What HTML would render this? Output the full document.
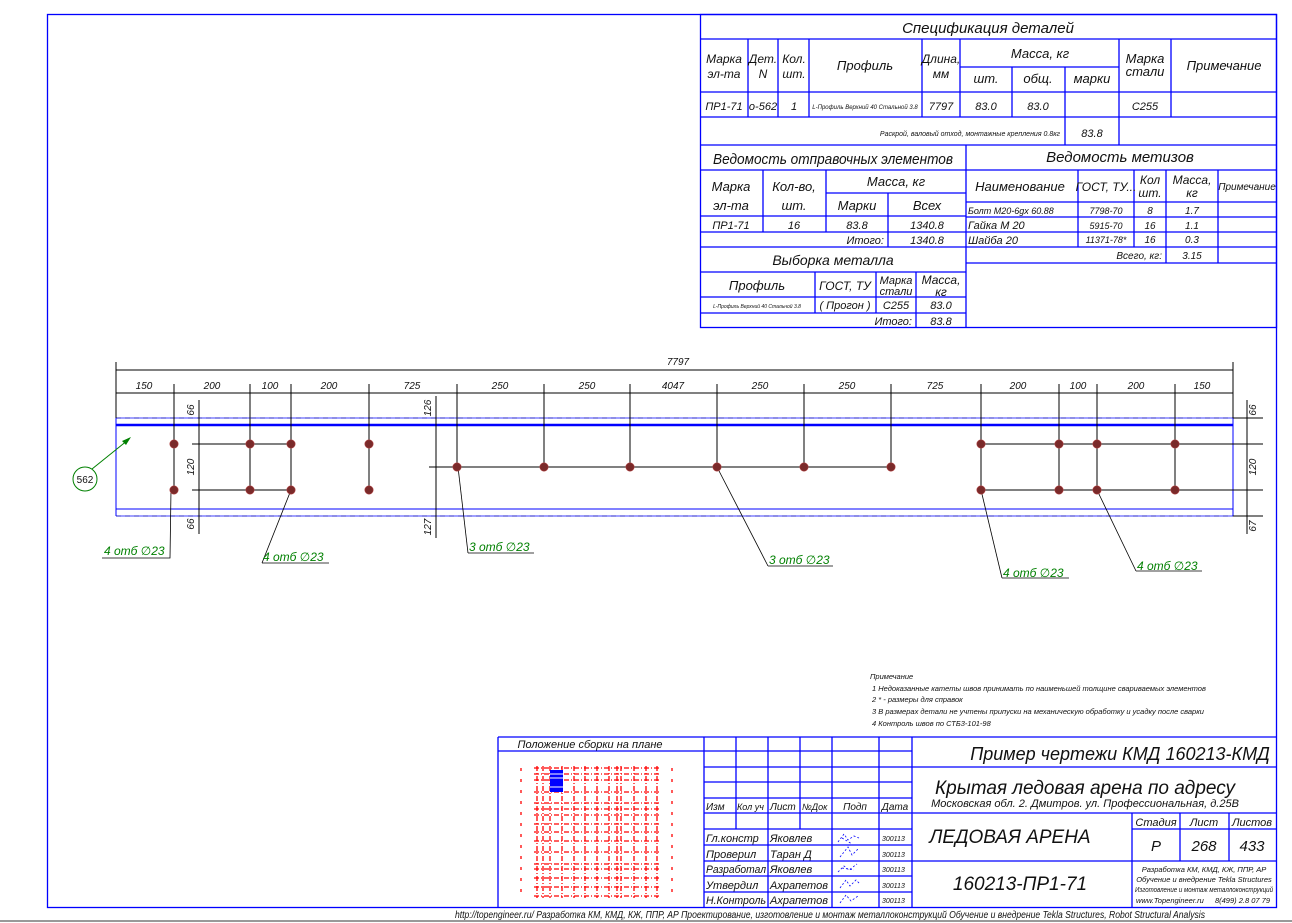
<!DOCTYPE html>
<html><head><meta charset="utf-8"><style>
html,body{margin:0;padding:0;background:#fff;width:1292px;height:923px;overflow:hidden}
svg{display:block}
text{font-family:"Liberation Sans Narrow","Liberation Sans","DejaVu Sans",sans-serif;font-style:italic;fill:#111}
.b{stroke:#0000ff;fill:none;stroke-width:1.3}
.k{stroke:#000;fill:none;stroke-width:1}
.g{fill:#008000}
.r{stroke:#ff0000;stroke-width:1.3;stroke-dasharray:5 2 1 2;fill:none}
</style></head><body>
<svg width="1292" height="923" viewBox="0 0 1292 923" xmlns="http://www.w3.org/2000/svg">
<rect x="47.5" y="14.5" width="1229" height="893" class="b"/>
<line x1="0" y1="921" x2="1292" y2="921" stroke="#999" stroke-width="2"/>
<text x="455" y="918" font-size="10" textLength="750" lengthAdjust="spacingAndGlyphs">http://topengineer.ru/  Разработка КМ, КМД, КЖ, ППР, АР  Проектирование, изготовление и монтаж металлоконструкций  Обучение и внедрение Tekla Structures, Robot Structural Analysis</text>

<g class="b">
<rect x="700.5" y="14.5" width="576" height="313"/>
<line x1="700" y1="39" x2="1277" y2="39"/>
<line x1="700" y1="92" x2="1277" y2="92"/>
<line x1="700" y1="117" x2="1277" y2="117"/>
<line x1="700" y1="145" x2="1277" y2="145"/>
<line x1="748" y1="39" x2="748" y2="117"/>
<line x1="778" y1="39" x2="778" y2="117"/>
<line x1="809" y1="39" x2="809" y2="117"/>
<line x1="922" y1="39" x2="922" y2="117"/>
<line x1="960" y1="39" x2="960" y2="117"/>
<line x1="1012" y1="67" x2="1012" y2="117"/>
<line x1="1065" y1="67" x2="1065" y2="145"/>
<line x1="960" y1="67" x2="1119" y2="67"/>
<line x1="1119" y1="39" x2="1119" y2="145"/>
<line x1="1171" y1="39" x2="1171" y2="117"/>
<line x1="966" y1="145" x2="966" y2="328"/>
<line x1="700" y1="170" x2="1277" y2="170"/>
<line x1="763" y1="170" x2="763" y2="232"/>
<line x1="826" y1="170" x2="826" y2="232"/>
<line x1="826" y1="193" x2="966" y2="193"/>
<line x1="888" y1="193" x2="888" y2="247"/>
<line x1="700" y1="216" x2="966" y2="216"/>
<line x1="700" y1="232" x2="966" y2="232"/>
<line x1="700" y1="247" x2="966" y2="247"/>
<line x1="700" y1="272" x2="966" y2="272"/>
<line x1="700" y1="297" x2="966" y2="297"/>
<line x1="700" y1="313" x2="966" y2="313"/>
<line x1="815" y1="272" x2="815" y2="313"/>
<line x1="876" y1="272" x2="876" y2="313"/>
<line x1="916" y1="272" x2="916" y2="328"/>
<line x1="966" y1="202" x2="1277" y2="202"/>
<line x1="966" y1="217" x2="1277" y2="217"/>
<line x1="966" y1="232" x2="1277" y2="232"/>
<line x1="966" y1="247" x2="1277" y2="247"/>
<line x1="966" y1="263" x2="1277" y2="263"/>
<line x1="1078" y1="170" x2="1078" y2="247"/>
<line x1="1134" y1="170" x2="1134" y2="247"/>
<line x1="1166" y1="170" x2="1166" y2="263"/>
<line x1="1218" y1="170" x2="1218" y2="263"/>
</g>
<g font-size="13">
<text x="988" y="33" text-anchor="middle" font-size="15">Спецификация деталей</text>
<text x="724" y="63" text-anchor="middle" font-size="12">Марка</text><text x="724" y="78" text-anchor="middle" font-size="12">эл-та</text>
<text x="763" y="63" text-anchor="middle" font-size="12">Дет.</text><text x="763" y="78" text-anchor="middle" font-size="12">N</text>
<text x="794" y="63" text-anchor="middle" font-size="12">Кол.</text><text x="794" y="78" text-anchor="middle" font-size="12">шт.</text>
<text x="865" y="70" text-anchor="middle">Профиль</text>
<text x="941" y="63" text-anchor="middle" font-size="12">Длина,</text><text x="941" y="78" text-anchor="middle" font-size="12">мм</text>
<text x="1040" y="58" text-anchor="middle">Масса, кг</text>
<text x="986" y="83" text-anchor="middle">шт.</text><text x="1038" y="83" text-anchor="middle">общ.</text><text x="1092" y="83" text-anchor="middle">марки</text>
<text x="1145" y="63" text-anchor="middle">Марка</text><text x="1145" y="76" text-anchor="middle">стали</text>
<text x="1224" y="70" text-anchor="middle">Примечание</text>
<text x="724" y="110" text-anchor="middle" font-size="11">ПР1-71</text>
<text x="763" y="110" text-anchor="middle" font-size="11">о-562</text>
<text x="794" y="110" text-anchor="middle" font-size="11">1</text>
<text x="865" y="109" text-anchor="middle" font-size="6">L-Профиль Верхний 40 Стальной 3.8</text>
<text x="941" y="110" text-anchor="middle" font-size="11">7797</text>
<text x="986" y="110" text-anchor="middle" font-size="11">83.0</text>
<text x="1038" y="110" text-anchor="middle" font-size="11">83.0</text>
<text x="1145" y="110" text-anchor="middle" font-size="11">С255</text>
<text x="1060" y="136" text-anchor="end" font-size="7">Раскрой, валовый отход, монтажные крепления 0.8кг</text>
<text x="1092" y="137" text-anchor="middle" font-size="11">83.8</text>
<text x="833" y="164" text-anchor="middle" font-size="15" textLength="240" lengthAdjust="spacingAndGlyphs">Ведомость отправочных элементов</text>
<text x="1120" y="162" text-anchor="middle" font-size="15">Ведомость метизов</text>
<text x="731" y="191" text-anchor="middle">Марка</text><text x="731" y="210" text-anchor="middle">эл-та</text>
<text x="794" y="191" text-anchor="middle">Кол-во,</text><text x="794" y="210" text-anchor="middle">шт.</text>
<text x="896" y="186" text-anchor="middle">Масса, кг</text>
<text x="857" y="210" text-anchor="middle">Марки</text><text x="927" y="210" text-anchor="middle">Всех</text>
<text x="731" y="229" text-anchor="middle" font-size="11">ПР1-71</text>
<text x="794" y="229" text-anchor="middle" font-size="11">16</text>
<text x="857" y="229" text-anchor="middle" font-size="11">83.8</text>
<text x="927" y="229" text-anchor="middle" font-size="11">1340.8</text>
<text x="884" y="244" text-anchor="end" font-size="11">Итого:</text>
<text x="927" y="244" text-anchor="middle" font-size="11">1340.8</text>
<text x="833" y="265" text-anchor="middle" font-size="14">Выборка металла</text>
<text x="757" y="290" text-anchor="middle">Профиль</text>
<text x="845" y="290" text-anchor="middle" font-size="12">ГОСТ, ТУ</text>
<text x="896" y="284" text-anchor="middle" font-size="11">Марка</text><text x="896" y="295" text-anchor="middle" font-size="11">стали</text>
<text x="941" y="284" text-anchor="middle" font-size="12">Масса,</text><text x="941" y="296" text-anchor="middle" font-size="12">кг</text>
<text x="757" y="308" text-anchor="middle" font-size="5">L-Профиль Верхний 40 Стальной 3.8</text>
<text x="845" y="309" text-anchor="middle" font-size="11">( Прогон )</text>
<text x="896" y="309" text-anchor="middle" font-size="11">С255</text>
<text x="941" y="309" text-anchor="middle" font-size="11">83.0</text>
<text x="912" y="325" text-anchor="end" font-size="11">Итого:</text>
<text x="941" y="325" text-anchor="middle" font-size="11">83.8</text>
<text x="1020" y="191" text-anchor="middle">Наименование</text>
<text x="1106" y="191" text-anchor="middle" font-size="12">ГОСТ, ТУ...</text>
<text x="1150" y="184" text-anchor="middle" font-size="12">Кол</text><text x="1150" y="197" text-anchor="middle" font-size="12">шт.</text>
<text x="1192" y="184" text-anchor="middle" font-size="12">Масса,</text><text x="1192" y="197" text-anchor="middle" font-size="12">кг</text>
<text x="1247" y="190" text-anchor="middle" font-size="10">Примечание</text>
<text x="968" y="214" font-size="9">Болт М20-6gx 60.88</text>
<text x="968" y="229" font-size="11">Гайка М 20</text>
<text x="968" y="244" font-size="11">Шайба 20</text>
<text x="1106" y="214" text-anchor="middle" font-size="9">7798-70</text>
<text x="1106" y="229" text-anchor="middle" font-size="9">5915-70</text>
<text x="1106" y="243" text-anchor="middle" font-size="9">11371-78*</text>
<text x="1150" y="214" text-anchor="middle" font-size="10">8</text>
<text x="1150" y="229" text-anchor="middle" font-size="10">16</text>
<text x="1150" y="243" text-anchor="middle" font-size="10">16</text>
<text x="1192" y="214" text-anchor="middle" font-size="10">1.7</text>
<text x="1192" y="229" text-anchor="middle" font-size="10">1.1</text>
<text x="1192" y="243" text-anchor="middle" font-size="10">0.3</text>
<text x="1162" y="259" text-anchor="end" font-size="10">Всего, кг:</text>
<text x="1192" y="259" text-anchor="middle" font-size="10">3.15</text>
</g>

<g>
<line x1="116" y1="418" x2="1233" y2="418" stroke="#7a7a3a" stroke-dasharray="5 4"/>
<line x1="116" y1="418" x2="1233" y2="418" stroke="#0000ff" stroke-width="0.8"/>
<line x1="116" y1="425" x2="1233" y2="425" stroke="#0000ff" stroke-width="2.5"/>
<line x1="116" y1="509" x2="1233" y2="509" stroke="#0000ff" stroke-width="1"/>
<line x1="116" y1="516" x2="1233" y2="516" stroke="#7a7a3a" stroke-dasharray="5 4"/>
<line x1="116" y1="516" x2="1233" y2="516" stroke="#0000ff" stroke-width="0.8"/>
<line x1="116" y1="418" x2="116" y2="516" stroke="#0000ff"/>
<line x1="1233" y1="418" x2="1233" y2="516" stroke="#0000ff"/>
</g>
<g class="k">
<line x1="116" y1="362" x2="116" y2="418"/>
<line x1="1233" y1="362" x2="1233" y2="418"/>
<line x1="116" y1="370" x2="1233" y2="370"/>
<line x1="116" y1="393" x2="1233" y2="393"/>
<line x1="174" y1="384" x2="174" y2="490"/>
<line x1="250" y1="384" x2="250" y2="490"/>
<line x1="291" y1="384" x2="291" y2="490"/>
<line x1="369" y1="384" x2="369" y2="490"/>
<line x1="457" y1="384" x2="457" y2="467"/>
<line x1="544" y1="384" x2="544" y2="467"/>
<line x1="630" y1="384" x2="630" y2="467"/>
<line x1="717" y1="384" x2="717" y2="467"/>
<line x1="804" y1="384" x2="804" y2="467"/>
<line x1="891" y1="384" x2="891" y2="467"/>
<line x1="981" y1="384" x2="981" y2="490"/>
<line x1="1059" y1="384" x2="1059" y2="490"/>
<line x1="1097" y1="384" x2="1097" y2="490"/>
<line x1="1175" y1="384" x2="1175" y2="490"/>
<line x1="192" y1="444" x2="291" y2="444"/>
<line x1="192" y1="490" x2="291" y2="490"/>
<line x1="429" y1="467" x2="891" y2="467"/>
<line x1="981" y1="444" x2="1263" y2="444"/>
<line x1="981" y1="490" x2="1263" y2="490"/>
<line x1="199" y1="400" x2="199" y2="534"/>
<line x1="436" y1="396" x2="436" y2="538"/>
<line x1="1247" y1="400" x2="1247" y2="534"/>
<line x1="1233" y1="418" x2="1263" y2="418"/>
<line x1="1233" y1="516" x2="1263" y2="516"/>
<polyline points="102,558 170,558 171,490" stroke-width="0.8"/>
<polyline points="262,563 329,563" stroke-width="0.8"/>
<line x1="262" y1="563" x2="291" y2="490" stroke-width="0.8"/>
<polyline points="468,553 534,553" stroke-width="0.8"/>
<line x1="468" y1="553" x2="458" y2="467" stroke-width="0.8"/>
<polyline points="768,566 833,566" stroke-width="0.8"/>
<line x1="768" y1="566" x2="717" y2="467" stroke-width="0.8"/>
<polyline points="1002,578 1069,578" stroke-width="0.8"/>
<line x1="1002" y1="578" x2="981" y2="490" stroke-width="0.8"/>
<polyline points="1136,571 1202,571" stroke-width="0.8"/>
<line x1="1136" y1="571" x2="1097" y2="490" stroke-width="0.8"/>
</g>
<g fill="#7a2a2a" stroke="#b04040" stroke-width="0.6">
<circle cx="174" cy="444" r="4.2"/><circle cx="174" cy="490" r="4.2"/>
<circle cx="250" cy="444" r="4.2"/><circle cx="250" cy="490" r="4.2"/>
<circle cx="291" cy="444" r="4.2"/><circle cx="291" cy="490" r="4.2"/>
<circle cx="369" cy="444" r="4.2"/><circle cx="369" cy="490" r="4.2"/>
<circle cx="457" cy="467" r="4.2"/><circle cx="544" cy="467" r="4.2"/><circle cx="630" cy="467" r="4.2"/>
<circle cx="717" cy="467" r="4.2"/><circle cx="804" cy="467" r="4.2"/><circle cx="891" cy="467" r="4.2"/>
<circle cx="981" cy="444" r="4.2"/><circle cx="981" cy="490" r="4.2"/>
<circle cx="1059" cy="444" r="4.2"/><circle cx="1059" cy="490" r="4.2"/>
<circle cx="1097" cy="444" r="4.2"/><circle cx="1097" cy="490" r="4.2"/>
<circle cx="1175" cy="444" r="4.2"/><circle cx="1175" cy="490" r="4.2"/>
</g>
<g font-size="10" text-anchor="middle" style="font-style:normal">
<text x="678" y="365">7797</text>
<text x="144" y="389">150</text><text x="212" y="389">200</text><text x="270" y="389">100</text>
<text x="329" y="389">200</text><text x="412" y="389">725</text><text x="500" y="389">250</text>
<text x="587" y="389">250</text><text x="673" y="389">4047</text><text x="760" y="389">250</text>
<text x="847" y="389">250</text><text x="935" y="389">725</text><text x="1018" y="389">200</text>
<text x="1078" y="389">100</text><text x="1136" y="389">200</text><text x="1202" y="389">150</text>
<text transform="translate(194,410) rotate(-90)">66</text>
<text transform="translate(194,467) rotate(-90)">120</text>
<text transform="translate(194,524) rotate(-90)">66</text>
<text transform="translate(431,408) rotate(-90)">126</text>
<text transform="translate(431,527) rotate(-90)">127</text>
<text transform="translate(1256,410) rotate(-90)">66</text>
<text transform="translate(1256,467) rotate(-90)">120</text>
<text transform="translate(1256,526) rotate(-90)">67</text>
</g>
<g font-size="12" style="font-style:normal">
<text x="104" y="555" class="g">4 отб  ∅23</text>
<text x="263" y="561" class="g">4 отб  ∅23</text>
<text x="469" y="551" class="g">3 отб  ∅23</text>
<text x="769" y="564" class="g">3 отб  ∅23</text>
<text x="1003" y="577" class="g">4 отб  ∅23</text>
<text x="1137" y="570" class="g">4 отб  ∅23</text>
</g>
<circle cx="85" cy="479" r="12" fill="none" stroke="#008000"/>
<text x="85" y="483" text-anchor="middle" font-size="10" style="font-style:normal">562</text>
<line x1="92" y1="469" x2="128" y2="440" stroke="#008000"/>
<polygon points="131,437 122,441 126,445" fill="#008000"/>

<g font-size="7.5">
<text x="870" y="679">Примечание</text>
<text x="872" y="691">1  Недоказанные катеты швов принимать по наименьшей толщине свариваемых элементов</text>
<text x="872" y="702">2   * - размеры для справок</text>
<text x="872" y="714">3  В размерах детали не учтены припуски на механическую обработку и усадку после сварки</text>
<text x="872" y="726">4  Контроль швов по СТБ3-101-98</text>
</g>

<g class="b">
<line x1="498" y1="737" x2="1277" y2="737"/>
<line x1="498" y1="737" x2="498" y2="907"/>
<line x1="498" y1="751" x2="704" y2="751"/>
<line x1="704" y1="737" x2="704" y2="907"/>
<line x1="912" y1="737" x2="912" y2="907"/>
<line x1="736" y1="737" x2="736" y2="829"/>
<line x1="768" y1="737" x2="768" y2="907"/>
<line x1="800" y1="737" x2="800" y2="829"/>
<line x1="832" y1="737" x2="832" y2="907"/>
<line x1="879" y1="737" x2="879" y2="907"/>
<line x1="704" y1="751" x2="912" y2="751"/>
<line x1="704" y1="767" x2="1277" y2="767"/>
<line x1="704" y1="782" x2="912" y2="782"/>
<line x1="704" y1="798" x2="912" y2="798"/>
<line x1="704" y1="813" x2="1277" y2="813"/>
<line x1="704" y1="829" x2="912" y2="829"/>
<line x1="1132" y1="829" x2="1277" y2="829"/>
<line x1="704" y1="845" x2="912" y2="845"/>
<line x1="704" y1="861" x2="1277" y2="861"/>
<line x1="704" y1="876" x2="912" y2="876"/>
<line x1="704" y1="892" x2="912" y2="892"/>
<line x1="1132" y1="813" x2="1132" y2="907"/>
<line x1="1180" y1="813" x2="1180" y2="861"/>
<line x1="1229" y1="813" x2="1229" y2="861"/>
</g>
<g font-size="11">
<text x="590" y="748" text-anchor="middle">Положение сборки на плане</text>
<text x="706" y="810" font-size="10">Изм</text><text x="737" y="810" font-size="9">Кол уч</text>
<text x="770" y="810" font-size="10">Лист</text><text x="802" y="810" font-size="9">№Док</text>
<text x="855" y="810" font-size="10" text-anchor="middle">Подп</text><text x="895" y="810" font-size="10" text-anchor="middle">Дата</text>
<text x="706" y="842">Гл.констр</text><text x="770" y="842">Яковлев</text>
<text x="706" y="858">Проверил</text><text x="770" y="858">Таран Д</text>
<text x="706" y="873" textLength="60" lengthAdjust="spacingAndGlyphs">Разработал</text><text x="770" y="873">Яковлев</text>
<text x="706" y="889">Утвердил</text><text x="770" y="889" textLength="58" lengthAdjust="spacingAndGlyphs">Ахрапетов</text>
<text x="706" y="904" textLength="60" lengthAdjust="spacingAndGlyphs">Н.Контроль</text><text x="770" y="904" textLength="58" lengthAdjust="spacingAndGlyphs">Ахрапетов</text>
<g font-size="7"><text x="882" y="841">300113</text><text x="882" y="857">300113</text><text x="882" y="872">300113</text><text x="882" y="888">300113</text><text x="882" y="903">300113</text></g>
<text x="1120" y="760" text-anchor="middle" font-size="18">Пример чертежи КМД  160213-КМД</text>
<text x="1085" y="794" text-anchor="middle" font-size="19">Крытая ледовая арена по адресу</text>
<text x="1085" y="807" text-anchor="middle" font-size="11">Московская обл. 2. Дмитров. ул. Профессиональная, д.25В</text>
<text x="1010" y="843" text-anchor="middle" font-size="19">ЛЕДОВАЯ АРЕНА</text>
<text x="1020" y="890" text-anchor="middle" font-size="19">160213-ПР1-71</text>
<text x="1156" y="826" text-anchor="middle">Стадия</text><text x="1204" y="826" text-anchor="middle">Лист</text><text x="1252" y="826" text-anchor="middle">Листов</text>
<text x="1156" y="851" text-anchor="middle" font-size="15">Р</text><text x="1204" y="851" text-anchor="middle" font-size="15">268</text><text x="1252" y="851" text-anchor="middle" font-size="15">433</text>
<g font-size="7.5"><text x="1204" y="872" text-anchor="middle">Разработка КМ, КМД, КЖ, ППР, АР</text>
<text x="1204" y="882" text-anchor="middle">Обучение и внедрение Tekla Structures</text>
<text x="1204" y="892" text-anchor="middle" textLength="138" lengthAdjust="spacingAndGlyphs">Изготовление и монтаж металлоконструкций</text>
<text x="1136" y="903">www.Topengineer.ru</text><text x="1270" y="903" text-anchor="end">8(499) 2.8 07 79</text></g>
</g>
<g stroke="#0000ff" stroke-width="0.8" stroke-dasharray="2 2" fill="none">
<path d="M838 842 l6 -8 l4 6 l6 -4 l5 2 M842 838 l10 6"/>
<path d="M840 857 l8 -10 l4 8 l6 -6"/>
<path d="M838 872 l6 -6 l5 4 l8 -6 M842 868 l12 2"/>
<path d="M840 888 l6 -8 l4 6 l6 -6 l4 4"/>
<path d="M840 903 l6 -8 l5 6 l7 -5"/>
</g>
<g class="r">
<line x1="534" y1="768" x2="659" y2="768"/><line x1="534" y1="774" x2="659" y2="774"/>
<line x1="534" y1="780" x2="659" y2="780"/><line x1="534" y1="792" x2="659" y2="792"/>
<line x1="534" y1="803" x2="659" y2="803"/><line x1="534" y1="809" x2="659" y2="809"/>
<line x1="534" y1="815" x2="659" y2="815"/><line x1="534" y1="824" x2="659" y2="824"/>
<line x1="534" y1="832" x2="659" y2="832"/><line x1="534" y1="841" x2="659" y2="841"/>
<line x1="534" y1="852" x2="659" y2="852"/><line x1="534" y1="864" x2="659" y2="864"/>
<line x1="534" y1="869" x2="659" y2="869"/><line x1="534" y1="878" x2="659" y2="878"/>
<line x1="534" y1="887" x2="659" y2="887"/><line x1="534" y1="896" x2="659" y2="896"/>
<line x1="537" y1="766" x2="537" y2="898"/><line x1="543" y1="766" x2="543" y2="898"/>
<line x1="550" y1="766" x2="550" y2="898"/><line x1="562" y1="766" x2="562" y2="898"/>
<line x1="574" y1="766" x2="574" y2="898"/><line x1="585" y1="766" x2="585" y2="898"/>
<line x1="597" y1="766" x2="597" y2="898"/><line x1="609" y1="766" x2="609" y2="898"/>
<line x1="617" y1="766" x2="617" y2="898"/><line x1="621" y1="766" x2="621" y2="898"/>
<line x1="634" y1="766" x2="634" y2="898"/><line x1="646" y1="766" x2="646" y2="898"/>
<line x1="657" y1="766" x2="657" y2="898"/>
<line x1="521" y1="768" x2="521" y2="898" stroke-dasharray="3 8"/>
<line x1="672" y1="768" x2="672" y2="898" stroke-dasharray="3 8"/>
</g>
<rect x="550" y="770" width="13" height="22" fill="#0000ff"/>
<g stroke="#fff" stroke-width="1"><line x1="550" y1="774" x2="563" y2="774"/><line x1="550" y1="778" x2="563" y2="778"/><line x1="550" y1="787" x2="563" y2="787"/></g>
</svg>
</body></html>
